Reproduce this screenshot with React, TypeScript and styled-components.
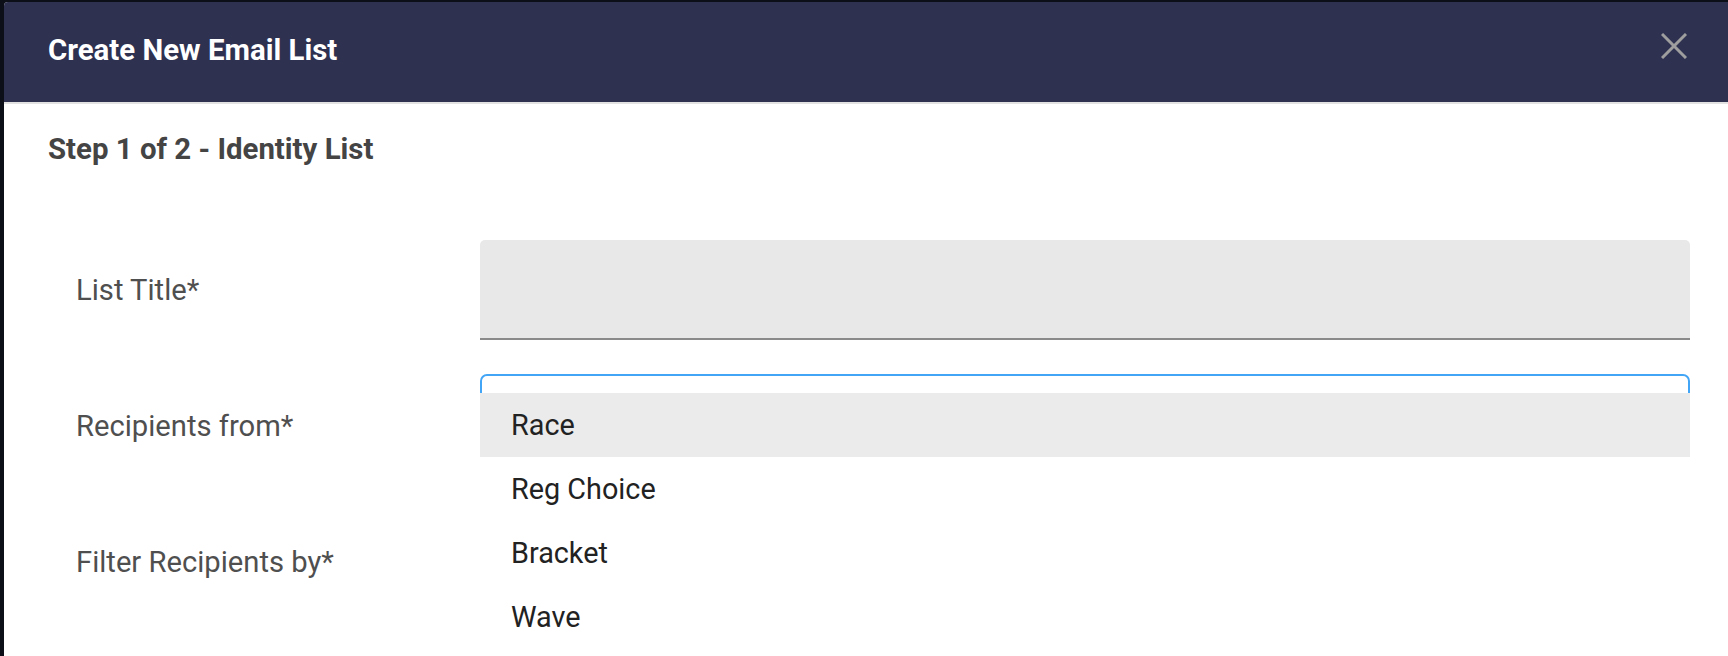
import React from 'react';
import styled, { createGlobalStyle } from 'styled-components';

const GlobalStyle = createGlobalStyle`
  html, body {
    margin: 0;
    padding: 0;
    background: #0d0f18;
    overflow: hidden;
    font-family: Roboto, "Liberation Sans", Arial, sans-serif;
  }
`;

const Page = styled.div`
  height: 656px;
  padding: 2px 0 0 4px;
  box-sizing: border-box;
`;

const Modal = styled.div`
  width: 1726px;
  height: 654px;
  background: #fff;
  border-radius: 4px 0 0 0;
  overflow: hidden;
`;

const Header = styled.div`
  height: 100px;
  padding: 0 43px 0 44px;
  display: flex;
  align-items: center;
  justify-content: space-between;
  background: #2e3150;
  border-bottom: 2px solid #e2e2e2;
`;

const Title = styled.h1`
  margin: 0 0 4px;
  font-size: 29.4px;
  font-weight: 700;
  color: #fff;
`;

const CloseButton = styled.button`
  width: 26px;
  height: 26px;
  padding: 0;
  margin-bottom: 12px;
  border: none;
  background: transparent;
  cursor: pointer;
  display: flex;
`;

const Body = styled.div`
  padding: 29px 40px 0 44px;
`;

const StepTitle = styled.h2`
  margin: 0 0 75px;
  font-size: 29.4px;
  line-height: 32px;
  font-weight: 700;
  color: #444;
`;

const Form = styled.div`
  display: grid;
  grid-template-columns: 432px 1fr;
  grid-auto-rows: 100px;
  row-gap: 36px;
`;

const Label = styled.label`
  padding-left: 28px;
  display: flex;
  align-items: center;
  font-size: 29.2px;
  color: #4f4f4f;
`;

const TextInput = styled.input`
  height: 100px;
  box-sizing: border-box;
  border: none;
  border-bottom: 2px solid #8a8a8a;
  border-radius: 5px 5px 0 0;
  background: #e8e8e8;
  padding: 0 24px;
  font: inherit;
  font-size: 28.8px;
  outline: none;
`;

const SelectWrap = styled.div`
  position: relative;
  height: 100px;
`;

const SelectBox = styled.div`
  height: 100%;
  margin-top: -2px;
  box-sizing: border-box;
  border: 2px solid #42a5f5;
  border-radius: 7px;
`;

const Menu = styled.ul`
  position: absolute;
  top: 17px;
  left: 0;
  right: 0;
  margin: 0;
  padding: 0;
  list-style: none;
  background: #fff;
  z-index: 2;
`;

const MenuItem = styled.li<{ selected?: boolean }>`
  height: 64px;
  display: flex;
  align-items: center;
  padding-left: 31px;
  font-size: 28.8px;
  color: #222;
  background: ${p => (p.selected ? '#ebebeb' : '#fff')};
`;

const options = ['Race', 'Reg Choice', 'Bracket', 'Wave'];

export default function App() {
  return (
    <Page>
      <GlobalStyle />
      <Modal>
        <Header>
          <Title>Create New Email List</Title>
          <CloseButton aria-label="Close">
            <svg width="26" height="26" viewBox="0 0 26 26">
              <path d="M1 1 L25 25 M25 1 L1 25" stroke="#9e9e9e" strokeWidth="3" />
            </svg>
          </CloseButton>
        </Header>
        <Body>
          <StepTitle>Step 1 of 2 - Identity List</StepTitle>
          <Form>
            <Label>List Title*</Label>
            <TextInput />
            <Label>Recipients from*</Label>
            <SelectWrap>
              <SelectBox />
              <Menu>
                {options.map((o, i) => (
                  <MenuItem key={o} selected={i === 0}>
                    {o}
                  </MenuItem>
                ))}
              </Menu>
            </SelectWrap>
            <Label>Filter Recipients by*</Label>
            <SelectWrap />
          </Form>
        </Body>
      </Modal>
    </Page>
  );
}
